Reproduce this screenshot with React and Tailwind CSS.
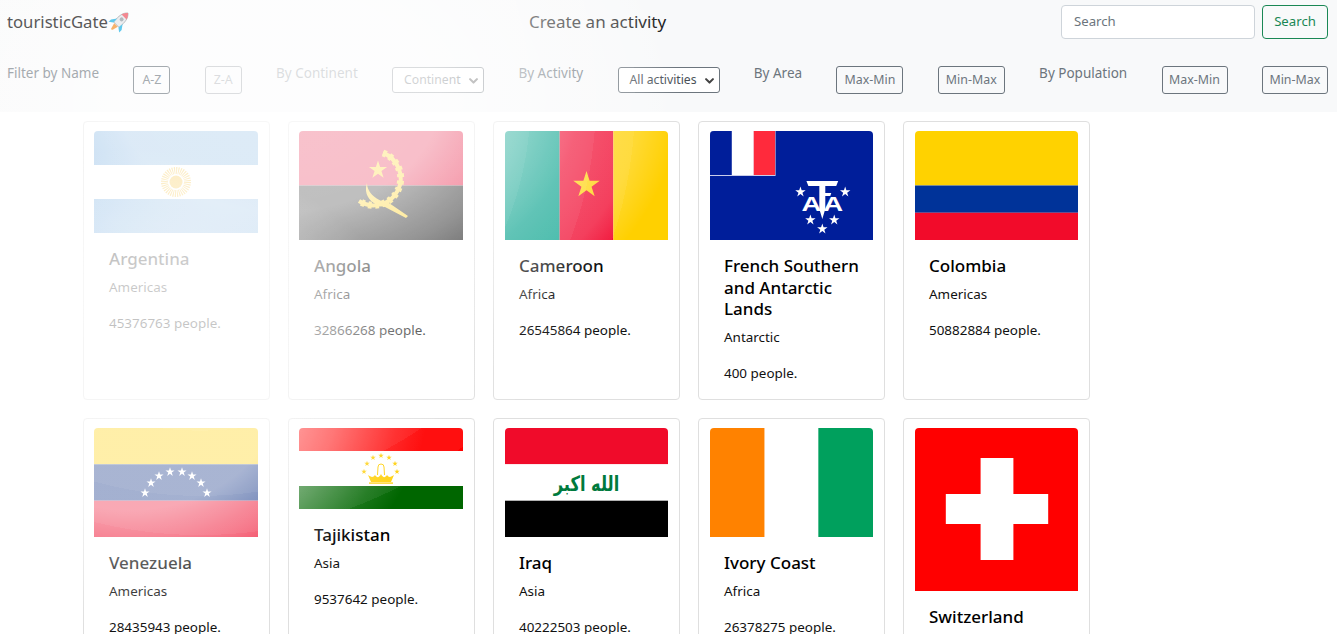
import React from "react";

function starPoints(cx, cy, r, rot = -90) {
  const pts = [];
  for (let i = 0; i < 10; i++) {
    const rad = i % 2 === 0 ? r : r * 0.382;
    const a = ((rot + i * 36) * Math.PI) / 180;
    pts.push(`${(cx + rad * Math.cos(a)).toFixed(2)},${(cy + rad * Math.sin(a)).toFixed(2)}`);
  }
  return pts.join(" ");
}
const Star = ({ x, y, r, fill = "#fff", rot }) => <polygon points={starPoints(x, y, r, rot)} fill={fill} />;

const Svg = ({ h, children }) => (
  <svg viewBox={`0 0 164 ${h}`} preserveAspectRatio="none" className="block w-full rounded-t-[4px]" style={{ height: h }}>
    {children}
  </svg>
);

const Argentina = () => (
  <Svg h={102}>
    <rect width="164" height="34" fill="#74acdf" />
    <rect y="34" width="164" height="34" fill="#fff" />
    <rect y="68" width="164" height="34" fill="#74acdf" />
    <circle cx="82" cy="51" r="11.5" fill="none" stroke="#f6b40e" strokeWidth="7" strokeDasharray="1 1" />
    <circle cx="82" cy="51" r="6.5" fill="#f6b40e" />
  </Svg>
);

const Angola = () => (
  <Svg h={109}>
    <rect width="164" height="54.5" fill="#e4002b" />
    <rect y="54.5" width="164" height="54.5" fill="#000" />
    <path d="M84 22 A27 27 0 1 1 60 70" fill="none" stroke="#ffcb00" strokeWidth="4" />
    <path d="M84 22 A27 27 0 1 1 60 70" fill="none" stroke="#ffcb00" strokeWidth="7" strokeDasharray="3.5 3.5" />
    <Star x={79} y={39} r={9.5} fill="#ffcb00" />
    <path d="M68 52 C68 62 78 70 90 72 L109 85 L107 87 L86 76 C72 74 64 64 68 52Z" fill="#ffcb00" />
  </Svg>
);

const Cameroon = () => (
  <Svg h={109}>
    <rect width="55" height="109" fill="#00a08a" />
    <rect x="55" width="54" height="109" fill="#f00028" />
    <rect x="109" width="55" height="109" fill="#ffd000" />
    <Star x={82} y={54} r={14} fill="#ffd000" />
  </Svg>
);

const Taaf = () => (
  <Svg h={109}>
    <rect width="164" height="109" fill="#001e9a" />
    <rect x="0" y="0" width="66" height="45" fill="#c9cdea" />
    <rect x="0" y="0" width="22" height="44" fill="#001e9a" />
    <rect x="22" y="0" width="22" height="44" fill="#fff" />
    <rect x="44" y="0" width="21.5" height="44" fill="#ff2a3c" />
    <Star x={91} y={61} r={5.5} />
    <Star x={136} y={61} r={5.5} />
    <Star x={101} y={89} r={5.5} />
    <Star x={125} y={89} r={5.5} />
    <Star x={113} y={98} r={5.5} />
    <polygon points="97,50 129,50 127,55 116,55 116,62 122,62 121,65 116,65 116,78 113,88 110,78 110,55 99,55" fill="#fff" />
    <text x="102" y="80" fontFamily="'Liberation Sans', sans-serif" fontWeight="700" fontSize="21" fill="#fff" textAnchor="middle" textLength="20" lengthAdjust="spacingAndGlyphs">A</text>
    <text x="124" y="80" fontFamily="'Liberation Sans', sans-serif" fontWeight="700" fontSize="21" fill="#fff" textAnchor="middle" textLength="20" lengthAdjust="spacingAndGlyphs">A</text>
  </Svg>
);

const Colombia = () => (
  <Svg h={109}>
    <rect width="164" height="54.5" fill="#ffd200" />
    <rect y="54.5" width="164" height="27.25" fill="#003399" />
    <rect y="81.75" width="164" height="27.25" fill="#f20b2a" />
  </Svg>
);

const Venezuela = () => (
  <Svg h={109}>
    <rect width="164" height="36.3" fill="#ffcf00" />
    <rect y="36.3" width="164" height="36.4" fill="#00247d" />
    <rect y="72.7" width="164" height="36.3" fill="#ef1030" />
    {[[51, 65], [57, 55], [65, 48], [76, 44], [88, 44], [98, 48], [107, 55], [113, 65]].map(([x, y], i) => (
      <Star key={i} x={x} y={y} r={4.8} />
    ))}
  </Svg>
);

const Tajikistan = () => (
  <Svg h={81}>
    <rect width="164" height="23" fill="#ff0000" />
    <rect y="23" width="164" height="35" fill="#fff" />
    <rect y="58" width="164" height="23" fill="#006600" />
    <path d="M69 47 C72 49 74 50 76 47 C78 50 80 50 82 46 C84 50 86 50 88 47 C90 50 92 49 95 47 L92 54 L72 54Z" fill="#ffce00" />
    <rect x="70" y="54.4" width="24" height="1.4" fill="#ffce00" />
    <path d="M78.5 47 L79 39 A3 3 0 0 1 85 39 L85.5 47" fill="none" stroke="#ffce00" strokeWidth="1" />
    {[[65, 43.7], [68, 35.7], [74, 29.7], [82, 27.7], [90, 29.7], [96, 35.7], [98, 43.7]].map(([x, y], i) => (
      <Star key={i} x={x} y={y} r={2.9} fill="#ffce00" />
    ))}
  </Svg>
);

const Iraq = () => (
  <Svg h={109}>
    <rect width="164" height="36.3" fill="#f00b2a" />
    <rect y="36.3" width="164" height="36.4" fill="#fff" />
    <rect y="72.7" width="164" height="36.3" fill="#000" />
    <text x="82" y="63" direction="rtl" textAnchor="middle" fontFamily="'DejaVu Sans', sans-serif" fontWeight="700" fontSize="21" fill="#007a3d" textLength="66" lengthAdjust="spacingAndGlyphs">الله اكبر</text>
  </Svg>
);

const IvoryCoast = () => (
  <Svg h={109}>
    <rect width="55" height="109" fill="#ff8200" />
    <rect x="55" width="54" height="109" fill="#fff" />
    <rect x="109" width="55" height="109" fill="#00a05d" />
  </Svg>
);

const Switzerland = () => (
  <Svg h={163}>
    <rect width="164" height="163" fill="#ff0000" />
    <rect x="66" y="30" width="33" height="102" fill="#fff" />
    <rect x="31" y="66" width="103" height="30" fill="#fff" />
  </Svg>
);

const rowOne = [
  { Flag: Argentina, name: "Argentina", region: "Americas", people: 45376763 },
  { Flag: Angola, name: "Angola", region: "Africa", people: 32866268 },
  { Flag: Cameroon, name: "Cameroon", region: "Africa", people: 26545864, late: true },
  { Flag: Taaf, name: "French Southern and Antarctic Lands", region: "Antarctic", people: 400, late: true },
  { Flag: Colombia, name: "Colombia", region: "Americas", people: 50882884, late: true },
];
const rowTwo = [
  { Flag: Venezuela, name: "Venezuela", region: "Americas", people: 28435943 },
  { Flag: Tajikistan, name: "Tajikistan", region: "Asia", people: 9537642 },
  { Flag: Iraq, name: "Iraq", region: "Asia", people: 40222503, late: true },
  { Flag: IvoryCoast, name: "Ivory Coast", region: "Africa", people: 26378275, late: true },
  { Flag: Switzerland, name: "Switzerland", region: "Europe", people: 8654622, late: true },
];

const Card = ({ Flag, name, region, people, late }) => (
  <div className={`w-[187px] shrink-0 rounded-[4px] border border-[#dfdfdf] bg-white py-[9px] pr-[11px] ${late ? "pl-[11px]" : "pl-[10px]"}`}>
    <Flag />
    <div className={`pr-[6px] pt-[15px] pb-[16px] text-[#111] ${late ? "pl-[14px]" : "pl-[15px]"}`}>
      <h5 className="mb-[7.5px] text-[17px] leading-[21.5px] font-medium text-black">{name}</h5>
      <p className="mb-[16px] text-[13.45px] leading-[20px]">{region}</p>
      <p className="text-[13.45px] leading-[20px]">{people} people.</p>
    </div>
  </div>
);

const OutlineBtn = ({ children, className = "" }) => (
  <button className={`h-[28px] whitespace-nowrap rounded-[3px] border border-[#6c757d] text-[12.4px] text-[#6c757d] ${className}`}>{children}</button>
);

const Label = ({ children, className = "" }) => (
  <span className={`-mt-[15px] text-[13.5px] leading-[20px] text-[#6c757d] ${className}`}>{children}</span>
);

const Select = ({ children, className = "" }) => (
  <span className={`flex h-[26px] items-center justify-between rounded-[3px] border border-[#6c757d] bg-white pl-[11px] pr-[4px] pt-[1px] text-[12.2px] text-[#495057] ${className}`}>
    {children}
    <svg width="11" height="11" viewBox="0 0 16 16" fill="none" stroke="#444" strokeWidth="3" strokeLinecap="round" strokeLinejoin="round">
      <path d="M3 6l5 5 5-5" />
    </svg>
  </span>
);

const Rocket = () => (
  <svg width="25" height="25" viewBox="0 0 25 25" className="-ml-[1px] shrink-0">
    <g transform="rotate(45 12.5 12.5)">
      <path d="M12.5 0.5 C16.5 4 17 9 16.4 17 L8.6 17 C8 9 8.5 4 12.5 0.5Z" fill="#e6e9ec" stroke="#8b8f94" strokeWidth="0.7" />
      <path d="M12.5 0.5 C14.4 2.1 15.5 4 16 6 L9 6 C9.5 4 10.6 2.1 12.5 0.5Z" fill="#f0616d" />
      <circle cx="12.5" cy="9.5" r="2" fill="#9aa3aa" />
      <path d="M8.6 12 L5 17 L5 20.5 L9 17.5Z" fill="#2bb8e8" />
      <path d="M16.4 12 L20 17 L20 20.5 L16 17.5Z" fill="#2bb8e8" />
      <path d="M10 17.5 L15 17.5 L13.5 23 L12.5 24 L11.5 23Z" fill="#f59a3c" />
    </g>
  </svg>
);

export default function App() {
  return (
    <div className="relative h-[634px] w-[1337px] overflow-hidden bg-white font-['Noto_Sans',sans-serif]">
      <header className="h-[112px] bg-[#f8f9fa]">
        <div className="flex h-[44px] items-center pl-[7px] pr-[9px]">
          <a className="relative z-20 flex items-center text-[16.7px] text-[#222] opacity-75">
            touristicGate
            <Rocket />
          </a>
          <span className="ml-[397px] text-[17px] text-[#222]">Create an activity</span>
          <div className="ml-auto flex gap-[7px]">
            <div className="flex h-[34px] w-[194px] items-center rounded-[4px] border border-[#ced4da] bg-white pl-[12px] text-[13.2px] text-[#6c757d]">Search</div>
            <button className="h-[34px] w-[66px] rounded-[4px] border border-[#198754] text-[13.2px] text-[#198754]">Search</button>
          </div>
        </div>
        <div className="mt-[22px] flex h-[28px] items-center justify-between pl-[7px] pr-[9px]">
          <Label className="relative z-20 opacity-60">Filter by Name</Label>
          <OutlineBtn className="relative z-20 w-[37px] opacity-60">A-Z</OutlineBtn>
          <OutlineBtn className="w-[37px]">Z-A</OutlineBtn>
          <Label>By Continent</Label>
          <Select className="w-[92px]">Continent</Select>
          <Label>By Activity</Label>
          <Select className="w-[102px]">All activities</Select>
          <Label>By Area</Label>
          <OutlineBtn className="w-[67px]">Max-Min</OutlineBtn>
          <OutlineBtn className="w-[67px]">Min-Max</OutlineBtn>
          <Label>By Population</Label>
          <OutlineBtn className="w-[66px]">Max-Min</OutlineBtn>
          <OutlineBtn className="w-[66px]">Min-Max</OutlineBtn>
        </div>
      </header>

      <main className="pl-[83px] pt-[9px]">
        <div className="flex h-[279px] gap-[18px]">
          {rowOne.map((c) => (
            <Card key={c.name} {...c} />
          ))}
        </div>
        <div className="mt-[18px] flex h-[279px] gap-[18px]">
          {rowTwo.map((c) => (
            <Card key={c.name} {...c} />
          ))}
        </div>
      </main>

      <div className="pointer-events-none absolute inset-0 z-10 bg-[radial-gradient(circle_435px_at_200px_100px,rgba(255,255,255,0.16)_0,rgba(255,255,255,0.16)_76%,rgba(255,255,255,0.11)_76%,rgba(255,255,255,0.11)_91%,rgba(255,255,255,0.06)_91%,rgba(255,255,255,0.06)_100%,transparent_100%),radial-gradient(ellipse_400px_280px_at_280px_100px,rgba(255,255,255,0.72)_0,rgba(255,255,255,0.7)_40%,rgba(255,255,255,0.5)_60%,rgba(255,255,255,0.3)_75%,rgba(255,255,255,0.2)_90%,transparent_100%),radial-gradient(ellipse_300px_240px_at_130px_390px,rgba(255,255,255,0.62)_0,rgba(255,255,255,0.62)_50%,rgba(255,255,255,0.4)_70%,rgba(255,255,255,0.1)_90%,transparent_100%)]" />
    </div>
  );
}
